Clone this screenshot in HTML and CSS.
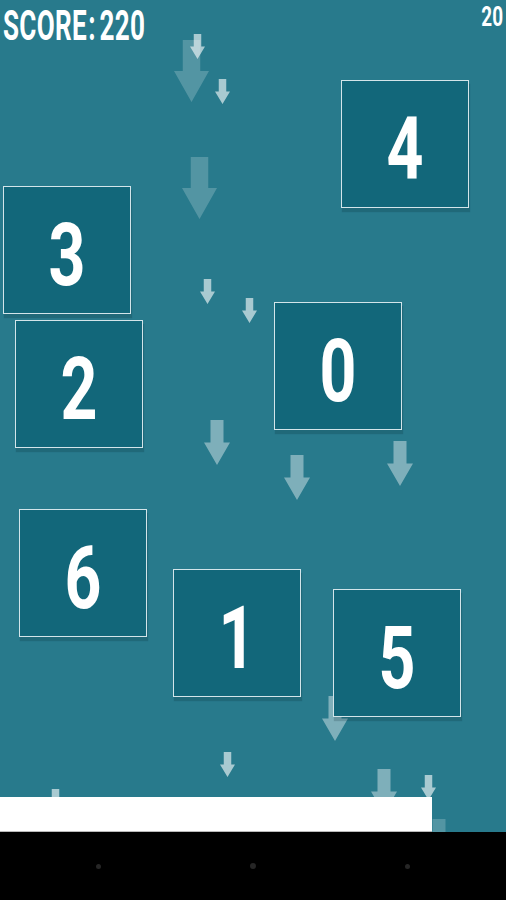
FILE: index.html
```html
<!DOCTYPE html>
<html lang="en">
<head>
<meta charset="utf-8">
<title>Number Drop</title>
<link rel="stylesheet" href="styles.css">
</head>
<body>
<div class="screen">
  <main class="game">
    <header class="hud">
      <span class="score">SCORE<span class="colon">:</span>220</span>
      <span class="timer">20</span>
    </header>

    <div class="arrow a-l o-2" style="--x:174px;--y:40px"><svg viewBox="0 0 30 52" preserveAspectRatio="none"><path d="M7.5 0H22.5V26H30L15 52L0 26H7.5Z"/></svg></div>
    <div class="arrow a-s o-6" style="--x:190px;--y:34px"><svg viewBox="0 0 30 52" preserveAspectRatio="none"><path d="M7.5 0H22.5V26H30L15 52L0 26H7.5Z"/></svg></div>
    <div class="arrow a-s o-6" style="--x:215px;--y:79px"><svg viewBox="0 0 30 52" preserveAspectRatio="none"><path d="M7.5 0H22.5V26H30L15 52L0 26H7.5Z"/></svg></div>
    <div class="arrow a-l o-2" style="--x:182px;--y:157px"><svg viewBox="0 0 30 52" preserveAspectRatio="none"><path d="M7.5 0H22.5V26H30L15 52L0 26H7.5Z"/></svg></div>
    <div class="arrow a-s o-6" style="--x:200px;--y:279px"><svg viewBox="0 0 30 52" preserveAspectRatio="none"><path d="M7.5 0H22.5V26H30L15 52L0 26H7.5Z"/></svg></div>
    <div class="arrow a-s o-6" style="--x:242px;--y:298px"><svg viewBox="0 0 30 52" preserveAspectRatio="none"><path d="M7.5 0H22.5V26H30L15 52L0 26H7.5Z"/></svg></div>
    <div class="arrow a-m o-4" style="--x:204px;--y:420px"><svg viewBox="0 0 30 52" preserveAspectRatio="none"><path d="M7.5 0H22.5V26H30L15 52L0 26H7.5Z"/></svg></div>
    <div class="arrow a-m o-4" style="--x:284px;--y:455px"><svg viewBox="0 0 30 52" preserveAspectRatio="none"><path d="M7.5 0H22.5V26H30L15 52L0 26H7.5Z"/></svg></div>
    <div class="arrow a-m o-4" style="--x:387px;--y:441px"><svg viewBox="0 0 30 52" preserveAspectRatio="none"><path d="M7.5 0H22.5V26H30L15 52L0 26H7.5Z"/></svg></div>
    <div class="arrow a-m o-4" style="--x:322px;--y:696px"><svg viewBox="0 0 30 52" preserveAspectRatio="none"><path d="M7.5 0H22.5V26H30L15 52L0 26H7.5Z"/></svg></div>
    <div class="arrow a-s o-6" style="--x:220px;--y:752px"><svg viewBox="0 0 30 52" preserveAspectRatio="none"><path d="M7.5 0H22.5V26H30L15 52L0 26H7.5Z"/></svg></div>
    <div class="arrow a-m o-4" style="--x:371px;--y:769px"><svg viewBox="0 0 30 52" preserveAspectRatio="none"><path d="M7.5 0H22.5V26H30L15 52L0 26H7.5Z"/></svg></div>
    <div class="arrow a-s o-6" style="--x:421px;--y:775px"><svg viewBox="0 0 30 52" preserveAspectRatio="none"><path d="M7.5 0H22.5V26H30L15 52L0 26H7.5Z"/></svg></div>
    <div class="arrow a-s o-6" style="--x:48px;--y:789px"><svg viewBox="0 0 30 52" preserveAspectRatio="none"><path d="M7.5 0H22.5V26H30L15 52L0 26H7.5Z"/></svg></div>
    <div class="arrow a-m o-2" style="--x:426px;--y:819px"><svg viewBox="0 0 30 52" preserveAspectRatio="none"><path d="M7.5 0H22.5V26H30L15 52L0 26H7.5Z"/></svg></div>

    <div class="tile" style="--x:341px;--y:80px"><span class="digit">4</span></div>
    <div class="tile" style="--x:3px;--y:186px"><span class="digit">3</span></div>
    <div class="tile" style="--x:15px;--y:320px"><span class="digit">2</span></div>
    <div class="tile" style="--x:274px;--y:302px"><span class="digit">0</span></div>
    <div class="tile" style="--x:19px;--y:509px"><span class="digit">6</span></div>
    <div class="tile" style="--x:173px;--y:569px"><span class="digit">1</span></div>
    <div class="tile" style="--x:333px;--y:589px"><span class="digit">5</span></div>

    <div class="paddle"></div>
  </main>
  <nav class="navbar">
    <i class="dot"></i>
    <i class="dot dot-mid"></i>
    <i class="dot"></i>
  </nav>
</div>
</body>
</html>
```

FILE: styles.css
```css
* { box-sizing: border-box; }

html, body {
  margin: 0;
  padding: 0;
  background: #000;
}

.screen {
  width: 506px;
  height: 900px;
  display: flex;
  flex-direction: column;
  font-family: Roboto, "Liberation Sans", sans-serif;
}

.game {
  position: relative;
  height: 832px;
  flex: none;
  background: #287a8c;
  display: flex;
  flex-direction: column;
  justify-content: space-between;
  overflow: hidden;
}

.hud {
  position: relative;
  z-index: 3;
  display: flex;
  justify-content: space-between;
  align-items: flex-start;
  color: #fff;
  font-weight: 700;
}

.score {
  display: inline-block;
  font-size: 42px;
  line-height: 1;
  margin: 5px 0 0 3px;
  letter-spacing: 0.5px;
  transform: scaleX(0.62);
  transform-origin: left top;
  white-space: nowrap;
}

.colon {
  margin: 0 6px 0 2px;
}

.timer {
  display: inline-block;
  font-size: 27px;
  line-height: 1;
  margin: 4px 3px 0 0;
  transform: scaleX(0.7);
  transform-origin: right top;
}

.arrow {
  position: absolute;
  left: var(--x);
  top: var(--y);
  z-index: 0;
  line-height: 0;
}

.arrow svg {
  display: block;
  width: 100%;
  height: 100%;
  fill: #fff;
}

.a-s { width: 15px; height: 25px; }
.a-m { width: 26px; height: 45px; }
.a-l { width: 35px; height: 62px; }

.o-2 { opacity: 0.2; }
.o-4 { opacity: 0.4; }
.o-6 { opacity: 0.6; }

.tile {
  position: absolute;
  left: var(--x);
  top: var(--y);
  z-index: 1;
  width: 128px;
  height: 128px;
  border: 1px solid #d3e5ea;
  background: #12677a;
  box-shadow: 1px 4px 1px rgba(0, 30, 40, 0.18);
  display: flex;
  align-items: center;
  justify-content: center;
}

.digit {
  display: inline-block;
  color: #fff;
  font-size: 87px;
  font-weight: 700;
  line-height: 1;
  transform: translateY(5px) scaleX(0.74);
}

.paddle {
  position: relative;
  z-index: 2;
  width: 432px;
  height: 35px;
  background: #fff;
  border-bottom: 1px solid #b9b9b9;
}

.navbar {
  flex: 1;
  background: #000;
  display: flex;
  justify-content: center;
  align-items: center;
  gap: 149px;
}

.dot {
  display: block;
  width: 5px;
  height: 5px;
  border-radius: 50%;
  background: #262626;
}

.dot-mid {
  width: 6px;
  height: 6px;
}
```
